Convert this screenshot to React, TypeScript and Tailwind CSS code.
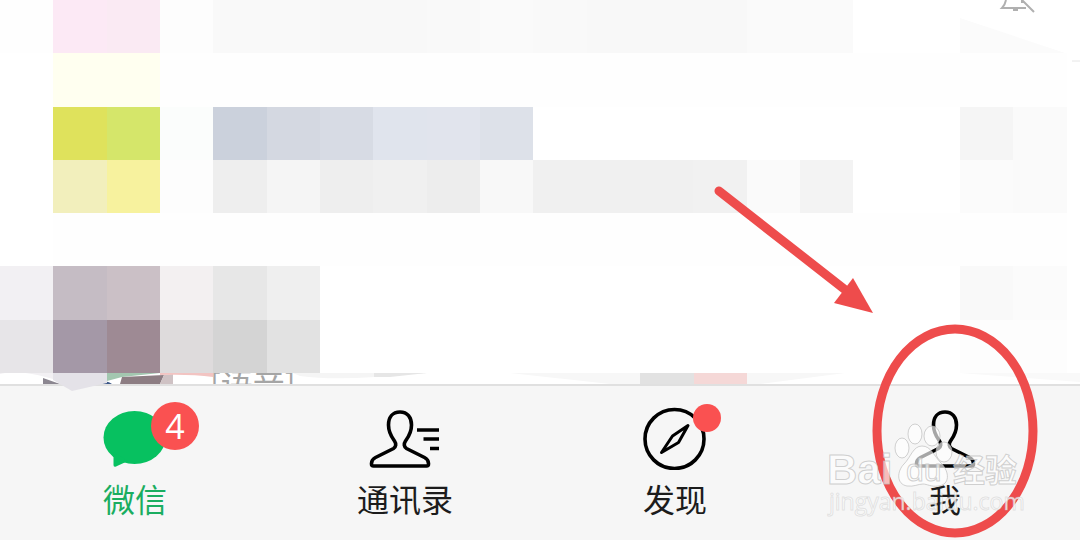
import type { ReactNode } from "react";

// Blurred chat rows, placed on a 20¼ x 7 mosaic
const tiles = [
    "row-start-1 col-start-1 col-span-1 bg-[#fefefe]",
    "row-start-1 col-start-2 bg-[#fce9f5]",
    "row-start-1 col-start-3 bg-[#faeaf3]",
    "row-start-1 col-start-4 bg-[#fdfdfd]",
    "row-start-1 col-start-5 col-span-2 bg-[#f9f9f9]",
    "row-start-1 col-start-7 col-span-2 bg-[#f8f8f8]",
    "row-start-1 col-start-9 bg-[#f9f9f9]",
    "row-start-1 col-start-10 bg-[#fafafa]",
    "row-start-1 col-start-11 bg-[#f9f9f9]",
    "row-start-1 col-start-12 col-span-3 bg-[#f8f8f8]",
    "row-start-1 col-start-15 col-span-2 bg-[#fafafa]",
    "row-start-2 col-start-2 col-span-2 bg-[#fffff0]",
    "row-start-2 col-start-4 col-span-17 bg-[#fefefe]",
    "row-start-3 col-start-2 bg-[#dfe25c]",
    "row-start-3 col-start-3 bg-[#d5e66a]",
    "row-start-3 col-start-4 bg-[#fbfdfc]",
    "row-start-3 col-start-5 bg-[#cbd1dc]",
    "row-start-3 col-start-6 bg-[#d4d8e1]",
    "row-start-3 col-start-7 bg-[#d7dbe4]",
    "row-start-3 col-start-8 bg-[#e0e4ed]",
    "row-start-3 col-start-9 bg-[#e1e4ed]",
    "row-start-3 col-start-10 bg-[#dde1e9]",
    "row-start-3 col-start-19 bg-[#f5f5f5]",
    "row-start-3 col-start-20 bg-[#fafafa]",
    "row-start-4 col-start-2 bg-[#f2efbc]",
    "row-start-4 col-start-3 bg-[#f7f29e]",
    "row-start-4 col-start-4 bg-[#fdfdfd]",
    "row-start-4 col-start-5 bg-[#eeeeee]",
    "row-start-4 col-start-6 bg-[#f5f5f5]",
    "row-start-4 col-start-7 bg-[#eeeeee]",
    "row-start-4 col-start-8 bg-[#f0f0f0]",
    "row-start-4 col-start-9 bg-[#ededed]",
    "row-start-4 col-start-10 bg-[#f8f8f8]",
    "row-start-4 col-start-11 col-span-3 bg-[#f0f0f0]",
    "row-start-4 col-start-14 bg-[#f1f1f1]",
    "row-start-4 col-start-15 bg-[#fafafa]",
    "row-start-4 col-start-16 bg-[#f3f3f3]",
    "row-start-4 col-start-19 bg-[#fbfbfb]",
    "row-start-4 col-start-20 bg-[#fafafa]",
    "row-start-5 col-start-2 col-span-19 bg-[#fefefe]",
    "row-start-6 col-start-1 bg-[#f2f0f3]",
    "row-start-6 col-start-2 bg-[#c5bcc4]",
    "row-start-6 col-start-3 bg-[#cbc0c6]",
    "row-start-6 col-start-4 bg-[#f3f0f1]",
    "row-start-6 col-start-5 bg-[#e7e7e7]",
    "row-start-6 col-start-6 bg-[#efefef]",
    "row-start-6 col-start-19 bg-[#f9f9f9]",
    "row-start-6 col-start-20 bg-[#fbfbfb]",
    "row-start-7 col-start-1 bg-[#e7e5e8]",
    "row-start-7 col-start-2 bg-[#a498a7]",
    "row-start-7 col-start-3 bg-[#9e8a94]",
    "row-start-7 col-start-4 bg-[#dedbdc]",
    "row-start-7 col-start-5 bg-[#d4d4d4]",
    "row-start-7 col-start-6 bg-[#e2e2e2]",
    "row-start-7 col-start-19 col-span-2 bg-[#fdfdfd]",
];

function PersonPath() {
    return (
        <path d="M48 6C40.500 6 36.500 11.500 36.500 19C36.500 27 40 31.500 42.500 35C44.500 38 44 41 41.500 42.500L23.500 51.500C20.500 53 19.500 54.500 19.500 57.500V58Q19.500 60 21.500 60H74.500Q76.500 60 76.500 58V57.500C76.500 54.500 75.500 53 72.500 51.500L54.500 42.500C52 41 51.500 38 53.500 35C56 31.500 59.500 27 59.500 19C59.500 11.500 55.500 6 48 6Z" />
    );
}

function ChatIcon() {
    return (
        <svg viewBox="0 0 96 64" className="h-16 w-24" fill="#07c160">
            <ellipse cx="47.500" cy="31.500" rx="31" ry="26.500" />
            <path d="M26.500 46V59Q26.500 61.500 29 60.500L41 55Z" />
        </svg>
    );
}

function ContactsIcon() {
    return (
        <svg viewBox="0 0 96 64" className="h-16 w-24" fill="none" stroke="#000" strokeWidth="3.600">
            <g transform="translate(-5 0)">
                <PersonPath />
            </g>
            <path d="M60 24H82M66.500 33H82M73 42.500H82" />
        </svg>
    );
}

function DiscoverIcon() {
    return (
        <svg viewBox="0 0 96 64" className="h-16 w-24" fill="none" stroke="#000" strokeWidth="3.600" strokeLinejoin="round">
            <circle cx="47.500" cy="33" r="29.500" />
            <path d="M61 19.500L45.500 30L34.500 46.500L51.500 36.500Z" strokeWidth="3" />
        </svg>
    );
}

function MeIcon() {
    return (
        <svg viewBox="0 0 96 64" className="h-16 w-24" fill="none" stroke="#000" strokeWidth="3.600">
            <PersonPath />
        </svg>
    );
}

type TabProps = {
    label: string;
    icon: ReactNode;
    badge?: ReactNode;
    active?: boolean;
};

function Tab({ label, icon, badge, active }: TabProps) {
    return (
        <button type="button" className="flex flex-1 flex-col items-center gap-2 pt-5 pb-[22px]">
            <span className="relative">
                {icon}
                {badge}
            </span>
            <span className={active ? "text-[32px] leading-10 text-[#1aad60]" : "text-[32px] leading-10 text-[#1c1c1c]"}>
                {label}
            </span>
        </button>
    );
}

function Watermark() {
    return (
        <g fill="#fff" fillOpacity="0.650" stroke="#bdbdbd" strokeOpacity="0.700" strokeWidth="1">
            <ellipse cx="222" cy="448" rx="7" ry="10" />
            <ellipse cx="235" cy="434" rx="7" ry="10" />
            <ellipse cx="252" cy="436" rx="8" ry="10" />
            <ellipse cx="264" cy="452" rx="8" ry="10" />
            <path d="M242 446C251 446 254 456 261 463C270 472 270 485 258 486C251 487 247 484 243 484C238 484 234 487 227 486C216 484 217 471 224 464C231 457 233 446 242 446Z" />
            <text x="147" y="484" fontSize="42" fontWeight="700" fontFamily="Liberation Sans, Arial, sans-serif">Bai</text>
            <text x="226" y="481" fontSize="32" fontFamily="Liberation Sans, Arial, sans-serif">du</text>
            <text x="273" y="482" fontSize="32" fontWeight="700" fontFamily="Noto Sans CJK SC, sans-serif">经验</text>
            <text x="149" y="510" fontSize="23" strokeOpacity="0.400" fillOpacity="0.800" fontFamily="Open Sans, sans-serif">jingyan.baidu.com</text>
        </g>
    );
}

export default function App() {
    return (
        <div className="relative w-full overflow-hidden bg-white font-['Noto_Sans_CJK_SC','Noto_Sans',sans-serif]">
            <main className="relative">
                <div className="grid h-[373px] grid-cols-[repeat(20,4fr)_1fr] grid-rows-7">
                    {tiles.map((tile) => (
                        <div key={tile} className={tile} />
                    ))}
                </div>

                {/* Sliver of the next chat, cut off by the tab bar */}
                <div className="relative h-[11px]">
                    <svg viewBox="0 0 1080 11" className="absolute top-0 left-0 h-[11px] w-[1080px]">
                        <path d="M0 0H53V6Q20 -4 0 1Z" fill="#f2f0f3" />
                        <path d="M43 5L60 11H43Z" fill="#8b8690" />
                        <path d="M107 0H160L122 4L107 8Z" fill="#a3c7b0" />
                        <path d="M100 11Q106 6 112 11Z" fill="#3d5788" />
                        <path d="M122 4L164 2L160 11H120Z" fill="#8d7d83" />
                        <path d="M164 2L173 1V11H160Z" fill="#cfc2c4" />
                        <path d="M160 0H213V4Q190 1 160 2Z" fill="#f2c4c2" />
                        <path d="M293 0H427L375 4Q330 7 300 3Z" fill="#f5f5f5" />
                        <path d="M374 0H427L390 4H374Z" fill="#e6e6e6" />
                        <path d="M510 0H845L760 11H610Z" fill="#f7f7f7" />
                        <path d="M640 0H694V11H640Z" fill="#e2e2e2" />
                        <path d="M694 0H747V11H694Z" fill="#f5d8d7" />
                        <path d="M960 0H1080V9L1000 3Z" fill="#f9f9f9" />
                    </svg>
                    <div className="h-full overflow-hidden pl-[210px]">
                        <p className="-mt-1.5 text-[32px] leading-8 text-[#a5a5a5]">[语音]</p>
                    </div>
                </div>
            </main>

            <nav className="flex border-t-2 border-[#e0e0e0] bg-[#f6f6f6]">
                <Tab
                    label="微信"
                    icon={<ChatIcon />}
                    active
                    badge={
                        <span className="absolute -top-1 -right-4 flex size-12 items-center justify-center rounded-full bg-[#fa5151] font-['Open_Sans',sans-serif] text-[34px] leading-none text-white">
                            4
                        </span>
                    }
                />
                <Tab label="通讯录" icon={<ContactsIcon />} />
                <Tab
                    label="发现"
                    icon={<DiscoverIcon />}
                    badge={<span className="absolute -top-0.5 right-0.5 size-7 rounded-full bg-[#fa5151]" />}
                />
                <Tab label="我" icon={<MeIcon />} />
            </nav>

            {/* Torn edge of the mosaic hanging over the tab bar */}
            <svg viewBox="0 0 54 18" className="pointer-events-none absolute top-[373px] left-[53px] h-[18px] w-[54px]">
                <path d="M0 0H54V10L19 18L0 7Z" fill="#e4e2e8" />
            </svg>

            {/* Annotations over the screen */}
            <svg viewBox="0 0 400 540" className="pointer-events-none absolute top-0 right-0 h-[540px] w-[400px]">
                <path d="M280 18L385 53H280Z" fill="#fbfbfb" />
                <path d="M326 0Q325 5 322 8H346M333 10H338M342 0V3M342 0L354 12" fill="none" stroke="#b0b0b0" strokeWidth="2" />
                <path d="M392 61H400" stroke="#e6e6e6" strokeWidth="1" />
                <path d="M39 191L168 292" stroke="#ee4c4c" strokeWidth="9" strokeLinecap="round" />
                <path d="M193 313L173 278L154 303Z" fill="#ee4c4c" />
                <ellipse cx="275" cy="431" rx="78" ry="102" fill="none" stroke="#ee4c4c" strokeWidth="9" />
                <Watermark />
            </svg>
        </div>
    );
}
